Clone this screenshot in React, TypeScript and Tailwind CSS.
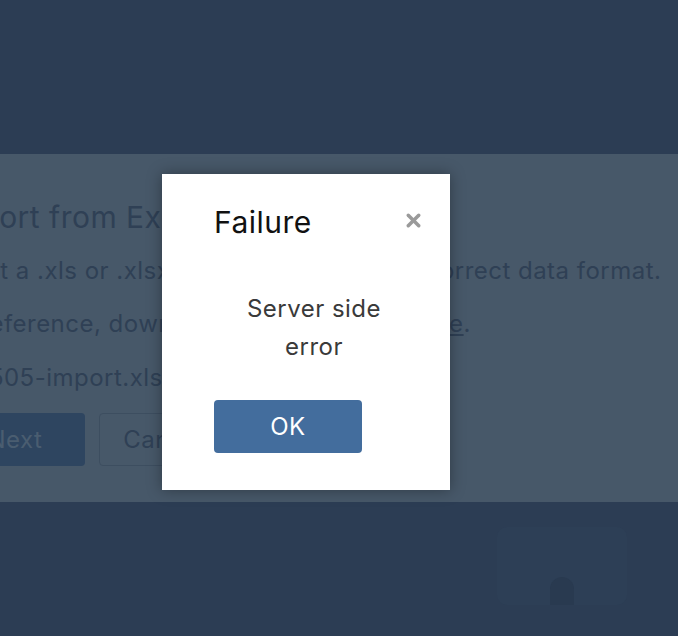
import { X } from "lucide-react";

export default function App() {
  return (
    <div className="relative h-[636px] w-full overflow-hidden bg-[#2c3d54] flex flex-col tracking-[0.03em]" style={{ fontFamily: "Inter, 'Liberation Sans', Arial, sans-serif" }}>
      {/* top page area (under overlay) */}
      <div className="h-[154px] shrink-0" />

      {/* import panel (under overlay) */}
      <div className="h-[348px] shrink-0 bg-[#475869] text-[#2f4055] overflow-hidden">
        <div className="-ml-[55px] pt-[45px] whitespace-nowrap">
          <h2 className="text-[30px] leading-[36px]">Import from Excel</h2>
          <p className="-ml-[10px] mt-[18px] text-[24px] leading-[36px]">
            Select a .xls or .xlsx file that matches the correct data format.
          </p>
          <p className="-ml-[10px] mt-[17px] text-[24px] leading-[36px]">
            For reference, download the sample file <span className="underline">here</span>.
          </p>
          <p className="-ml-[28px] mt-[18px] text-[24px] leading-[36px]">20180505-import.xlsx</p>
          <div className="mt-[17px] flex gap-[14px]">
            <button className="h-[53px] w-[140px] rounded-[4px] bg-[#2e4560] text-[24px] text-[#4a5d70]">Next</button>
            <button className="h-[53px] w-[130px] rounded-[4px] border border-[#3d4e60] text-[24px] text-[#2f4055]">Cancel</button>
          </div>
        </div>
      </div>

      {/* bottom area */}
      <div className="flex-1 flex justify-end pr-[51px] pt-[25px]">
        <div className="h-[78px] w-[130px] rounded-[10px] bg-[#2d3f56] flex items-end justify-center">
          <div className="h-[28px] w-[24px] rounded-t-[12px] bg-[#293a50]" />
        </div>
      </div>

      {/* modal */}
      <div className="absolute left-[162px] top-[174px] w-[288px] h-[316px] bg-white shadow-[0_0_14px_rgba(0,0,0,0.35)] pl-[52px] pr-[26px] pt-[28px]">
        <div className="flex items-start justify-between">
          <h3 className="text-[30px] leading-[40px] text-[#111]">Failure</h3>
          <X className="mt-[8px] h-[21px] w-[21px] text-[#9a9a9a]" strokeWidth={4} />
        </div>
        <p className="mt-[48px] pr-[10px] text-center text-[24px] leading-[38px] text-[#3a3a3a]">
          Server side<br />error
        </p>
        <button className="mt-[34px] h-[53px] w-[148px] rounded-[4px] bg-[#436d9d] text-[24px] text-white">OK</button>
      </div>
    </div>
  );
}
